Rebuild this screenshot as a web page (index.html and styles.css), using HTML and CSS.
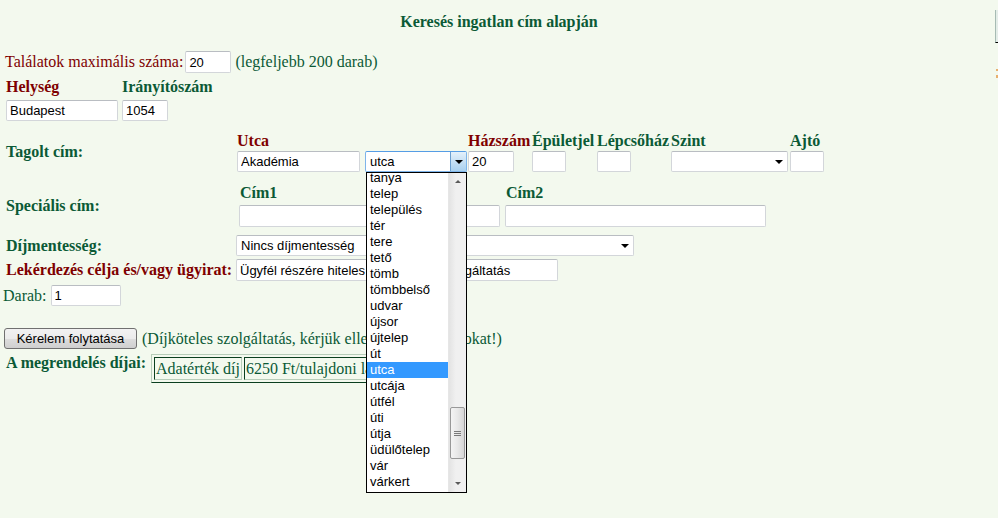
FILE: index.html
```html
<!DOCTYPE html>
<html lang="hu">
<head>
<meta charset="utf-8">
<title>Keresés ingatlan cím alapján</title>
<link rel="stylesheet" href="styles.css">
</head>
<body>
<h1 class="title">Keresés ingatlan cím alapján</h1>

<div class="row1">
  <span class="red">Találatok maximális száma:</span>
  <input class="in w46 h22 max" type="text" value="20">
  <span class="green note">(legfeljebb 200 darab)</span>
</div>

<div class="place">
  <div class="pcol pcol1">
    <div class="lbl red">Helység</div>
    <input class="in w112" type="text" value="Budapest">
  </div>
  <div class="pcol">
    <div class="lbl green">Irányítószám</div>
    <input class="in w45" type="text" value="1054">
  </div>
</div>

<div class="frow r-tagolt">
  <div class="flabel fl237 green">Tagolt cím:</div>
  <div class="tgrid">
    <div class="lbl red">Utca</div>
    <div></div>
    <div class="lbl red">Házszám</div>
    <div class="lbl green">Épületjel</div>
    <div class="lbl green">Lépcsőház</div>
    <div class="lbl green">Szint</div>
    <div class="lbl green">Ajtó</div>
    <input class="in w123" type="text" value="Akadémia">
    <div class="sel sel-open w102"><span class="seltext">utca</span><span class="selbtn"><span class="tri"></span></span></div>
    <input class="in w45" type="text" value="20">
    <input class="in w33" type="text" value="">
    <input class="in w33" type="text" value="">
    <div class="sel w116"><span class="seltext"></span><span class="tri tri-r"></span></div>
    <input class="in w33" type="text" value="">
  </div>
</div>

<div class="frow r-spec">
  <div class="flabel fl239 green">Speciális cím:</div>
  <div class="sgrid">
    <div class="lbl green">Cím1</div>
    <div class="lbl green">Cím2</div>
    <input class="in w261 h22" type="text" value="">
    <input class="in w261 h22" type="text" value="">
  </div>
</div>

<div class="frow r-dij">
  <div class="flabel fl236 green">Díjmentesség:</div>
  <div class="sel w397 h20"><span class="seltext">Nincs díjmentesség</span><span class="tri tri-r"></span></div>
</div>

<div class="frow r-lek">
  <div class="flabel fl236 red">Lekérdezés célja és/vagy ügyirat:</div>
  <input class="in w322 h22" type="text" value="Ügyfél részére hiteles tulajdoni lap szolgáltatás">
</div>

<div class="frow r-darab">
  <span class="green">Darab:</span>
  <input class="in w70 darab" type="text" value="1">
</div>

<div class="frow r-btn">
  <button class="btn" type="button">Kérelem folytatása</button>
  <span class="green note2">(Díjköteles szolgáltatás, kérjük ellenőrizze az adatokat!)</span>
</div>

<div class="frow r-fees">
  <div class="feelabel green">A megrendelés díjai:</div>
  <table class="fees">
    <tr><td>Adatérték díj</td><td>6250 Ft/tulajdoni lap</td></tr>
  </table>
</div>

<div class="dropdown">
  <ul class="opts">
    <li>tanya</li>
    <li>telep</li>
    <li>település</li>
    <li>tér</li>
    <li>tere</li>
    <li>tető</li>
    <li>tömb</li>
    <li>tömbbelső</li>
    <li>udvar</li>
    <li>újsor</li>
    <li>újtelep</li>
    <li>út</li>
    <li class="hl">utca</li>
    <li>utcája</li>
    <li>útfél</li>
    <li>úti</li>
    <li>útja</li>
    <li>üdülőtelep</li>
    <li>vár</li>
    <li>várkert</li>
  </ul>
  <div class="sbar">
    <div class="sb-btn"><span class="sb-up"></span></div>
    <div class="sb-gap"></div>
    <div class="thumb"><i></i><i></i><i></i></div>
    <div class="sb-fill"></div>
    <div class="sb-btn"><span class="sb-down"></span></div>
  </div>
</div>

<div class="edge"></div>
<div class="edge2"></div>
</body>
</html>
```

FILE: styles.css
```css
html, body {
  margin: 0;
  padding: 0;
}
body {
  background: #f3f9ee;
  font-family: "Liberation Serif", "Times New Roman", serif;
  font-size: 16px;
  line-height: 18px;
  color: #0b5a36;
  width: 998px;
  height: 518px;
  overflow: hidden;
}

.red { color: #7f0000; }
.green { color: #0b5a36; }

.title {
  margin: 13px 0 0;
  font-size: 16px;
  line-height: 18px;
  font-weight: bold;
  text-align: center;
  color: #0b5a36;
}

.in {
  box-sizing: border-box;
  height: 21px;
  margin: 0;
  padding: 0 0 0 3px;
  border: 1px solid #d3d6da;
  border-top-color: #b9bdc2;
  border-radius: 2px;
  background: #fff;
  font-family: "Liberation Sans", Arial, sans-serif;
  font-size: 13px;
  color: #000;
  outline: none;
}
.h22 { height: 22px; }
.h20 { height: 20px; }
.w33 { width: 34px; }
.w45 { width: 46px; }
.w46 { width: 46px; }
.w70 { width: 70px; }
.w102 { width: 102px; }
.w112 { width: 112px; }
.w116 { width: 117px; }
.w123 { width: 123px; }
.w261 { width: 261px; }
.w322 { width: 322px; }
.w397 { width: 398px; }

.lbl {
  font-weight: bold;
  white-space: nowrap;
  line-height: 18px;
}

.row1 {
  margin-top: 20px;
  height: 22px;
  display: flex;
  align-items: center;
  padding-left: 5px;
}
.row1 .max { margin-left: 2px; }
.row1 .note { margin-left: 4px; }

.place {
  margin-top: 5px;
  display: flex;
  padding-left: 6px;
}
.pcol {
  display: flex;
  flex-direction: column;
  gap: 4px;
}
.pcol1 { width: 116px; }

.frow {
  display: flex;
  align-items: center;
}
.flabel {
  box-sizing: border-box;
  padding-left: 6px;
  font-weight: bold;
  white-space: nowrap;
  flex: none;
}
.fl236 { width: 236px; }
.fl237 { width: 237px; }
.fl239 { width: 239px; }

.r-tagolt { margin-top: 11px; }
.tgrid {
  display: grid;
  grid-template-columns: 128px 103px 64px 65px 74px 119px auto;
  grid-template-rows: 18px 21px;
  row-gap: 1px;
  align-items: start;
}

.r-spec { margin-top: 12px; }
.sgrid {
  display: grid;
  grid-template-columns: 266px auto;
  grid-template-rows: 18px 22px;
  row-gap: 3px;
}
.sgrid .lbl { padding-left: 1px; }

.r-dij { margin-top: 8px; }
.r-lek { margin-top: 3px; }
.r-darab { margin-top: 4px; padding-left: 3px; }
.r-darab .darab { margin-left: 4px; }

.sel {
  box-sizing: border-box;
  height: 21px;
  display: flex;
  align-items: stretch;
  border: 1px solid #d3d6da;
  border-top-color: #b9bdc2;
  border-radius: 2px;
  background: #fff;
  font-family: "Liberation Sans", Arial, sans-serif;
  font-size: 13px;
  color: #000;
}
.seltext {
  flex: 1;
  display: flex;
  align-items: center;
  padding-left: 4px;
  white-space: nowrap;
  overflow: hidden;
}
.tri {
  width: 0;
  height: 0;
  border-left: 4px solid transparent;
  border-right: 4px solid transparent;
  border-top: 4px solid #000;
}
.tri-r {
  align-self: center;
  margin-right: 4px;
  margin-top: 1px;
}
.sel-open {
  border-color: #7eb4ea;
  border-top-color: #569de5;
}
.selbtn {
  width: 15px;
  display: flex;
  align-items: center;
  justify-content: center;
  border-left: 1px solid #6c9fcf;
  background: linear-gradient(#e4f1fb, #c6e0f4 50%, #a9d1ef);
}

.r-btn { margin-top: 22px; }
.btn {
  box-sizing: border-box;
  margin: 0 0 0 4px;
  width: 133px;
  height: 21px;
  padding: 0;
  border: 1px solid #707070;
  border-radius: 3px;
  background: linear-gradient(#f2f2f2 0%, #ebebeb 50%, #dddddd 51%, #cfcfcf 100%);
  font-family: "Liberation Sans", Arial, sans-serif;
  font-size: 13px;
  color: #000;
}
.note2 { margin-left: 5px; }

.r-fees {
  margin-top: 5px;
  align-items: flex-start;
}
.feelabel {
  box-sizing: border-box;
  width: 151px;
  padding-left: 6px;
  font-weight: bold;
  white-space: nowrap;
}
.fees {
  border-collapse: separate;
  border-spacing: 2px;
  border: 1px solid;
  border-color: #b7cdb9 #0a3f1f #0a3f1f #b7cdb9;
  font-size: 16px;
  color: #0b5a36;
}
.fees td {
  border: 1px solid;
  border-color: #0a3f1f #b7cdb9 #b7cdb9 #0a3f1f;
  padding: 2px 1px 1px 1px;
  white-space: nowrap;
  line-height: 18px;
}

.dropdown {
  position: absolute;
  left: 366px;
  top: 172px;
  width: 101px;
  height: 321px;
  box-sizing: border-box;
  border: 1px solid #000;
  background: #fff;
  display: flex;
  overflow: hidden;
}
.opts {
  width: 82px;
  margin: -3px 0 0 0;
  padding: 0;
  list-style: none;
  font-family: "Liberation Sans", Arial, sans-serif;
  font-size: 13px;
  color: #000;
}
.opts li {
  height: 16px;
  line-height: 16px;
  padding-left: 3px;
  white-space: nowrap;
}
.opts .hl {
  background: #3399ff;
  color: #fff;
}
.sbar {
  width: 17px;
  display: flex;
  flex-direction: column;
  align-items: center;
  background: linear-gradient(90deg, #e3e3e3, #f0f0f0 40%, #f0f0f0);
  border-left: 1px solid #e6e6e6;
}
.sb-btn {
  height: 17px;
  width: 17px;
  display: flex;
  align-items: center;
  justify-content: center;
  flex: none;
}
.sb-up {
  width: 0;
  height: 0;
  border-left: 3px solid transparent;
  border-right: 3px solid transparent;
  border-bottom: 3px solid #5a5a5a;
}
.sb-down {
  width: 0;
  height: 0;
  border-left: 3px solid transparent;
  border-right: 3px solid transparent;
  border-top: 3px solid #5a5a5a;
}
.sb-gap { height: 217px; flex: none; }
.sb-fill { flex: 1; }
.thumb {
  box-sizing: border-box;
  width: 15px;
  height: 52px;
  flex: none;
  border: 1px solid #989898;
  border-radius: 2px;
  background: linear-gradient(90deg, #f4f4f4, #e8e8e8 50%, #d6d6d6);
  display: flex;
  flex-direction: column;
  align-items: center;
  justify-content: center;
  gap: 1px;
}
.thumb i {
  display: block;
  width: 7px;
  height: 1px;
  background: #7a7a7a;
}

.edge {
  position: absolute;
  right: 0;
  top: 10px;
  width: 2px;
  height: 32px;
  border-left: 1px solid #a6bbb3;
  border-bottom: 1px solid #000;
  background: #e4ede8;
}
.edge2 {
  position: absolute;
  right: 0;
  top: 69px;
  width: 2px;
  height: 9px;
  border-top: 2px solid #e8b070;
  border-bottom: 3px solid #e8b070;
  box-sizing: border-box;
}
```
